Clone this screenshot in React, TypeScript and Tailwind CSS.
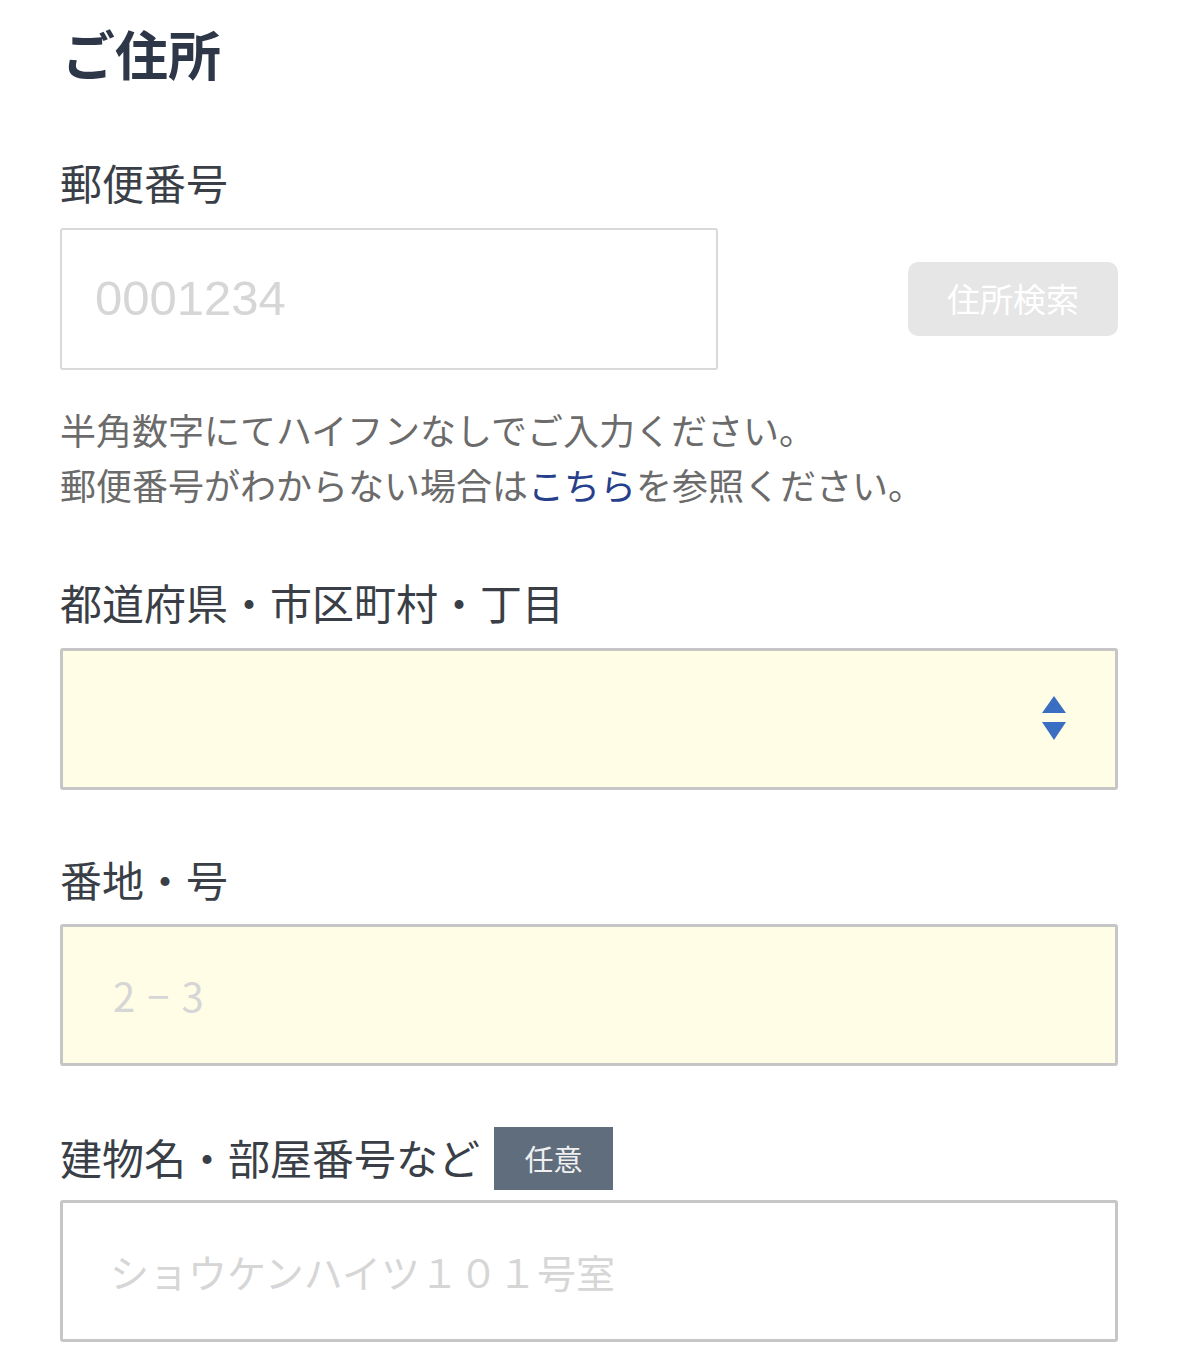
import React from "react";

const jp = { fontFamily: '"Noto Sans CJK JP", "Noto Sans", sans-serif' };

export default function App() {
  return (
    <div className="w-[1178px] min-h-[1368px] bg-white px-[60px] pt-[27px] text-[#3a3f47]" style={jp}>
      <h1 className="pl-[2px] text-[53px] leading-[52px] font-bold text-[#2d3748]">ご住所</h1>

      <div className="mt-[79px] text-[42px] leading-[48px]">郵便番号</div>
      <div className="mt-[22px] flex items-center justify-between">
        <div className="flex h-[142px] w-[658px] items-center rounded-[3px] border-2 border-[#d9d9d9] bg-white pl-[33px]">
          <span className="text-[49px] text-[#d6d6d6]" style={{ fontFamily: '"Liberation Sans", Arial, sans-serif' }}>
            0001234
          </span>
        </div>
        <div className="flex h-[74px] w-[210px] items-center justify-center rounded-[10px] bg-[#e6e6e6] text-[33px] text-white">
          住所検索
        </div>
      </div>

      <div className="mt-[32px] text-[36px] leading-[55px] text-[#6b6b6b]">
        <p>半角数字にてハイフンなしでご入力ください。</p>
        <p>
          郵便番号がわからない場合は<span className="text-[#27408b]">こちら</span>を参照ください。
        </p>
      </div>

      <div className="mt-[66px] text-[42px] leading-[48px]">都道府県・市区町村・丁目</div>
      <div className="mt-[22px] flex h-[142px] items-center justify-end rounded-[3px] border-[3px] border-[#c6c6c6] bg-[#fffde6] pr-[48px]">
        <svg width="26" height="46" viewBox="0 0 26 46">
          <polygon points="13,0 25,17 1,17" fill="#3a6ec2" />
          <polygon points="1,26 25,26 13,44" fill="#3a6ec2" />
        </svg>
      </div>

      <div className="mt-[65px] text-[42px] leading-[48px]">番地・号</div>
      <div className="mt-[21px] flex h-[142px] items-center rounded-[3px] border-[3px] border-[#c6c6c6] bg-[#fffde6] pl-[50px]">
        <span className="text-[40px] tracking-[0.3em] text-[#d6d6d6]">2−3</span>
      </div>

      <div className="mt-[61px] flex items-center gap-[14px]">
        <span className="-mt-[4px] text-[42px] leading-[48px]">建物名・部屋番号など</span>
        <span className="flex h-[63px] w-[119px] items-center justify-center bg-[#5f6d7d] text-[29px] text-[#f0f0f0]">
          任意
        </span>
      </div>
      <div className="mt-[10px] flex h-[142px] items-center rounded-[3px] border-[3px] border-[#c6c6c6] bg-white pl-[47px]">
        <span className="text-[39px] text-[#d6d6d6]">ショウケンハイツ１０１号室</span>
      </div>
    </div>
  );
}
